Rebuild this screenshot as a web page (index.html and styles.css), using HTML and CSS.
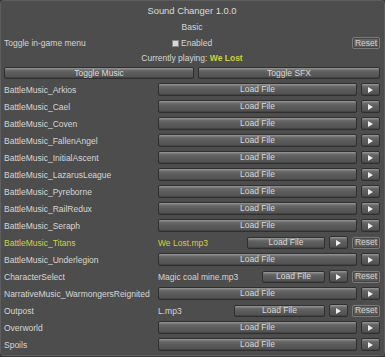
FILE: index.html
```html
<!DOCTYPE html>
<html>
<head>
<meta charset="utf-8">
<link rel="stylesheet" href="styles.css">
</head>
<body>
<div class="window">
  <div class="title">Sound Changer 1.0.0</div>
  <div class="section">Basic</div>
  <div class="toggle-row">
    <span class="label">Toggle in-game menu</span>
    <span class="check"><span class="box"></span>Enabled</span>
    <button class="btn reset">Reset</button>
  </div>
  <div class="playing">Currently playing: <span class="hl">We Lost</span></div>
  <div class="toggles">
    <button class="btn music">Toggle Music</button>
    <button class="btn sfx">Toggle SFX</button>
  </div>
  <div class="rows">
    <div class="row"><span class="label">BattleMusic_Arkios</span><div class="ctrl"><button class="btn load">Load File</button><button class="btn play"><span class="tri"></span></button></div></div>
    <div class="row"><span class="label">BattleMusic_Cael</span><div class="ctrl"><button class="btn load">Load File</button><button class="btn play"><span class="tri"></span></button></div></div>
    <div class="row"><span class="label">BattleMusic_Coven</span><div class="ctrl"><button class="btn load">Load File</button><button class="btn play"><span class="tri"></span></button></div></div>
    <div class="row"><span class="label">BattleMusic_FallenAngel</span><div class="ctrl"><button class="btn load">Load File</button><button class="btn play"><span class="tri"></span></button></div></div>
    <div class="row"><span class="label">BattleMusic_InitialAscent</span><div class="ctrl"><button class="btn load">Load File</button><button class="btn play"><span class="tri"></span></button></div></div>
    <div class="row"><span class="label">BattleMusic_LazarusLeague</span><div class="ctrl"><button class="btn load">Load File</button><button class="btn play"><span class="tri"></span></button></div></div>
    <div class="row"><span class="label">BattleMusic_Pyreborne</span><div class="ctrl"><button class="btn load">Load File</button><button class="btn play"><span class="tri"></span></button></div></div>
    <div class="row"><span class="label">BattleMusic_RailRedux</span><div class="ctrl"><button class="btn load">Load File</button><button class="btn play"><span class="tri"></span></button></div></div>
    <div class="row"><span class="label">BattleMusic_Seraph</span><div class="ctrl"><button class="btn load">Load File</button><button class="btn play"><span class="tri"></span></button></div></div>
    <div class="row"><span class="label hl">BattleMusic_Titans</span><div class="ctrl"><span class="file hl">We Lost.mp3</span><button class="btn load w-titans">Load File</button><button class="btn play"><span class="tri"></span></button><button class="btn reset">Reset</button></div></div>
    <div class="row"><span class="label">BattleMusic_Underlegion</span><div class="ctrl"><button class="btn load">Load File</button><button class="btn play"><span class="tri"></span></button></div></div>
    <div class="row"><span class="label">CharacterSelect</span><div class="ctrl"><span class="file">Magic coal mine.mp3</span><button class="btn load w-char">Load File</button><button class="btn play"><span class="tri"></span></button><button class="btn reset">Reset</button></div></div>
    <div class="row"><span class="label">NarrativeMusic_WarmongersReignited</span><div class="ctrl"><button class="btn load">Load File</button><button class="btn play"><span class="tri"></span></button></div></div>
    <div class="row"><span class="label">Outpost</span><div class="ctrl"><span class="file">L.mp3</span><button class="btn load w-out">Load File</button><button class="btn play"><span class="tri"></span></button><button class="btn reset">Reset</button></div></div>
    <div class="row"><span class="label">Overworld</span><div class="ctrl"><button class="btn load">Load File</button><button class="btn play"><span class="tri"></span></button></div></div>
    <div class="row"><span class="label">Spoils</span><div class="ctrl"><button class="btn load">Load File</button><button class="btn play"><span class="tri"></span></button></div></div>
  </div>
</div>
</body>
</html>
```
FILE: styles.css
```css
html, body {
  margin: 0;
  padding: 0;
  background: #3a3a3a;
}
.window {
  box-sizing: border-box;
  width: 385px;
  height: 356px;
  background: #4d4d4d;
  border: 1px solid #5e5e5e;
  border-radius: 4px;
  padding: 3px 4px 0 3px;
  font-family: "Liberation Sans", Arial, sans-serif;
  font-size: 8.5px;
  color: #d6d6d6;
  display: flex;
  flex-direction: column;
}
.title {
  font-size: 9.4px;
  text-align: center;
  height: 13px;
  line-height: 13px;
  color: #dcdcdc;
}
.section {
  text-align: center;
  height: 12px;
  line-height: 12px;
  margin-top: 4px;
}
.toggle-row {
  display: flex;
  align-items: center;
  height: 12px;
  margin-top: 4px;
}
.toggle-row .label {
  flex: 1;
}
.check {
  display: flex;
  align-items: center;
  width: 180px;
}
.box {
  width: 5px;
  height: 5px;
  background: #d8d8d8;
  border: 1px solid #888;
  margin-right: 2px;
}
.playing {
  text-align: center;
  height: 12px;
  line-height: 12px;
  margin-top: 3px;
}
.hl {
  color: #cbd43c;
}
.playing .hl {
  font-weight: bold;
}
.toggles {
  display: flex;
  gap: 4px;
  margin-top: 3px;
  height: 12px;
}
.toggles .btn {
  height: 12px;
}
.music {
  flex: 0 0 190px;
}
.sfx {
  flex: 1;
}
.btn {
  box-sizing: border-box;
  margin: 0;
  padding: 0;
  font-family: "Liberation Sans", Arial, sans-serif;
  font-size: 8.5px;
  color: #dadada;
  border: 1px solid #2f2f2f;
  border-radius: 2px;
  background: linear-gradient(#959595 0, #8a8a8a 1px, #6c6c6c 2px, #5d5d5d 45%, #505050 100%);
  box-shadow: inset 0 -1px 0 #444;
  display: flex;
  align-items: center;
  justify-content: center;
  line-height: 1;
}
.rows {
  display: flex;
  flex-direction: column;
  gap: 4px;
  margin-top: 4px;
}
.row {
  display: flex;
  align-items: center;
  height: 13px;
}
.row .label {
  width: 154px;
  white-space: nowrap;
}
.ctrl {
  flex: 1;
  display: flex;
  align-items: center;
  gap: 4px;
  height: 13px;
}
.file {
  flex: 1;
  white-space: nowrap;
}
.load {
  flex: 1;
  height: 13px;
}
.w-titans {
  flex: 0 0 78px;
  height: 12px;
}
.w-char {
  flex: 0 0 63px;
  height: 12px;
}
.w-out {
  flex: 0 0 91px;
  height: 12px;
}
.play {
  width: 19px;
  height: 13px;
}
.tri {
  width: 0;
  height: 0;
  border-left: 5px solid #f0f0f0;
  border-top: 3px solid transparent;
  border-bottom: 3px solid transparent;
}
.reset {
  width: 28px;
  height: 12px;
  border-color: #7a7a7a;
  background: linear-gradient(#6a6a6a, #555555);
  box-shadow: inset 0 0 0 1px #454545;
  color: #d0d0d0;
}
.ctrl .reset {
  height: 12px;
}
```
